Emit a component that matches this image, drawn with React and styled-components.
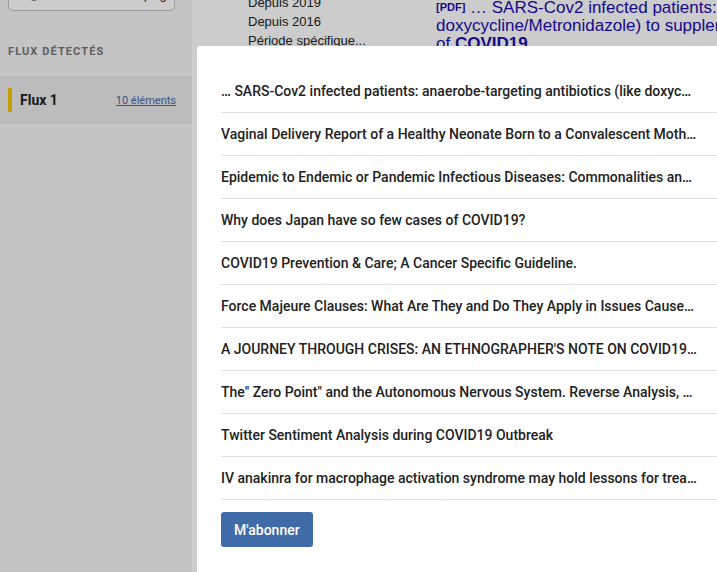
import React from 'react'
import styled, { createGlobalStyle } from 'styled-components'

const GlobalStyle = createGlobalStyle`
  html, body {
    margin: 0;
    padding: 0;
    height: 100%;
    overflow: hidden;
    background: #fff;
  }
  #root {
    height: 100%;
  }
`

const articles = [
  '… SARS-Cov2 infected patients: anaerobe-targeting antibiotics (like doxycycline/Metronidazole) to supplement the treatment',
  'Vaginal Delivery Report of a Healthy Neonate Born to a Convalescent Mother with COVID19',
  'Epidemic to Endemic or Pandemic Infectious Diseases: Commonalities and differences',
  'Why does Japan have so few cases of COVID19?',
  'COVID19 Prevention & Care; A Cancer Specific Guideline.',
  'Force Majeure Clauses: What Are They and Do They Apply in Issues Caused by COVID19',
  "A JOURNEY THROUGH CRISES: AN ETHNOGRAPHER'S NOTE ON COVID19 AND ITS IMPACT",
  'The" Zero Point" and the Autonomous Nervous System. Reverse Analysis, COVID19',
  'Twitter Sentiment Analysis during COVID19 Outbreak',
  'IV anakinra for macrophage activation syndrome may hold lessons for treating COVID19',
]

const App = () => {
  return (
    <Page>
      <GlobalStyle />
      <Sidebar>
        <SearchBox>
          <SearchIcon viewBox="0 0 16 16">
            <circle cx="8" cy="8" r="6" fill="none" stroke="#555" strokeWidth="1.6" />
            <line x1="5" y1="8" x2="11" y2="8" stroke="#555" strokeWidth="1.6" />
          </SearchIcon>
          <span>Ouvrir une page</span>
        </SearchBox>
        <SectionTitle>Flux détectés</SectionTitle>
        <FeedRow active>
          <FeedName>Flux 1</FeedName>
          <FeedLink href="#">10 éléments</FeedLink>
        </FeedRow>
      </Sidebar>

      <Main>
        <TimeMenu>
          <li>Depuis 2019</li>
          <li>Depuis 2016</li>
          <li>Période spécifique...</li>
        </TimeMenu>
        <Result>
          <PdfTag>[PDF]</PdfTag> … SARS-Cov2 infected patients: anaerobe-targeting antibiotics (like
          <br />
          doxycycline/Metronidazole) to supplement the treatment
          <br />
          of <b>COVID19</b>
        </Result>
      </Main>

      <Overlay />

      <Modal>
        <List>
          {articles.map((title, index) => (
            <Item key={index}>
              <ItemTitle>{title}</ItemTitle>
            </Item>
          ))}
        </List>
        <SubscribeButton>M'abonner</SubscribeButton>
      </Modal>
    </Page>
  )
}

const Page = styled.div`
  position: relative;
  display: flex;
  height: 100%;
  font-family: Roboto, 'Liberation Sans', sans-serif;
  color: #222;
`

const Sidebar = styled.aside`
  width: 192px;
  flex-shrink: 0;
  background: #f5f5f5;
  display: flex;
  flex-direction: column;
`

const SearchBox = styled.div`
  margin: -30px 17px 0 8px;
  height: 41px;
  border: 1px solid #c2c2c2;
  border-radius: 5px;
  background: #fff;
  display: flex;
  align-items: flex-start;
  padding: 15px 0 0 17px;
  box-sizing: border-box;
  font-size: 14px;
  line-height: 16px;
  color: #444;
  span {
    margin-left: 35px;
    white-space: nowrap;
  }
`

const SearchIcon = styled.svg`
  width: 16px;
  height: 16px;
  flex-shrink: 0;
`

const SectionTitle = styled.h3`
  margin: 34px 0 0 8px;
  font-size: 11px;
  font-weight: 700;
  letter-spacing: 1.1px;
  text-transform: uppercase;
  color: #767676;
  line-height: 14px;
`

const FeedRow = styled.div`
  margin-top: 17px;
  height: 48px;
  display: flex;
  align-items: center;
  justify-content: space-between;
  padding: 0 16px 0 20px;
  position: relative;
  background: ${props => (props.active ? '#ebebeb' : 'transparent')};
  &::before {
    content: '';
    position: absolute;
    left: 8px;
    top: 12px;
    width: 4px;
    height: 24px;
    background: #f7c600;
    display: ${props => (props.active ? 'block' : 'none')};
  }
`

const FeedName = styled.span`
  font-size: 14px;
  font-weight: 700;
  color: #222;
`

const FeedLink = styled.a`
  font-size: 11px;
  color: #4e67a6;
  text-decoration: underline;
`

const Main = styled.main`
  flex: 1;
  display: flex;
  background: #fff;
  padding-left: 56px;
  font-family: 'Liberation Sans', Arial, sans-serif;
`

const TimeMenu = styled.ul`
  list-style: none;
  margin: -7px 0 0 0;
  padding: 0;
  width: 188px;
  flex-shrink: 0;
  font-size: 13px;
  line-height: 19px;
  color: #222;
`

const Result = styled.div`
  margin-top: -2px;
  flex-shrink: 0;
  white-space: nowrap;
  font-size: 17px;
  line-height: 18px;
  color: #1a0dab;
  b {
    font-weight: 700;
  }
`

const PdfTag = styled.span`
  font-size: 11px;
  font-weight: 700;
  vertical-align: 2px;
`

const Overlay = styled.div`
  position: absolute;
  inset: 0;
  background: rgba(0, 0, 0, 0.2);
`

const Modal = styled.section`
  position: absolute;
  left: 197px;
  top: 46px;
  width: 600px;
  height: 600px;
  box-sizing: border-box;
  padding: 24px 24px;
  background: #fff;
  border-radius: 3px;
  font-family: Roboto, 'Liberation Sans', sans-serif;
`

const List = styled.ul`
  list-style: none;
  margin: 0;
  padding: 0;
`

const Item = styled.li`
  height: 42px;
  display: flex;
  align-items: center;
  border-bottom: 1px solid #e0e0e0;
`

const ItemTitle = styled.span`
  max-width: 476px;
  white-space: nowrap;
  overflow: hidden;
  text-overflow: ellipsis;
  font-size: 14px;
  font-weight: 500;
  color: #222;
`

const SubscribeButton = styled.button`
  margin-top: 12px;
  height: 35px;
  padding: 0 13px;
  border: none;
  border-radius: 3px;
  background: #3f6ba9;
  color: #fff;
  font-family: Roboto, 'Liberation Sans', sans-serif;
  font-size: 14px;
  font-weight: 500;
  cursor: pointer;
`

export default App
